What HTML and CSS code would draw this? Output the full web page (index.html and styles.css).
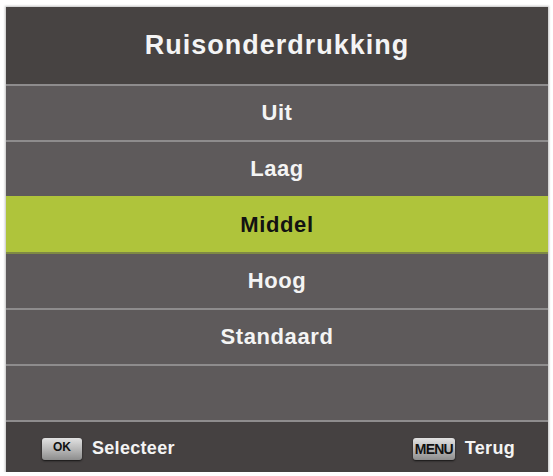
FILE: index.html
```html
<!DOCTYPE html>
<html lang="nl">
<head>
<meta charset="utf-8">
<title>Ruisonderdrukking</title>
<link rel="stylesheet" href="styles.css">
</head>
<body>
<div class="panel">
  <div class="header">Ruisonderdrukking</div>
  <div class="row">Uit</div>
  <div class="row">Laag</div>
  <div class="row selected">Middel</div>
  <div class="row">Hoog</div>
  <div class="row">Standaard</div>
  <div class="row"></div>
  <div class="footer">
    <div class="hint">
      <span class="key key-ok">OK</span>
      <span class="label">Selecteer</span>
    </div>
    <div class="hint">
      <span class="key key-menu">MENU</span>
      <span class="label">Terug</span>
    </div>
  </div>
</div>
</body>
</html>
```

FILE: styles.css
```css
html, body {
  margin: 0;
  padding: 0;
  background: #ffffff;
}

body {
  font-family: "Liberation Sans", Arial, sans-serif;
  font-weight: bold;
}

.panel {
  margin: 7px 0 0 6px;
  width: 542px;
  display: flex;
  flex-direction: column;
  box-shadow: 0 0 2px 1px rgba(120, 120, 120, 0.45);
}

.header {
  height: 77px;
  background: #474342;
  color: #f4f4f4;
  font-size: 27px;
  letter-spacing: 1px;
  display: flex;
  align-items: center;
  justify-content: center;
}

.row {
  height: 54px;
  border-top: 2px solid #8e8c8d;
  background: #5e5a5b;
  color: #f4f4f4;
  font-size: 22px;
  letter-spacing: 0.6px;
  display: flex;
  align-items: center;
  justify-content: center;
}

.row.selected {
  background: #afc43b;
  border-top-color: #afc43b;
  color: #121212;
}

.row.selected + .row {
  border-top-color: #7f8a44;
}

.footer {
  border-top: 2px solid #8e8c8d;
  background: #454141;
  display: flex;
  align-items: center;
  justify-content: space-between;
  padding: 3px 33px 0 36px;
  height: 47px;
}

.hint {
  display: flex;
  align-items: center;
  gap: 10px;
}

.label {
  color: #f4f4f4;
  font-size: 18px;
  letter-spacing: 0.3px;
}

.key {
  height: 22px;
  border-radius: 3px;
  background: linear-gradient(#e2e2e2, #b5b5b5 55%, #8d8d8d);
  box-shadow: 0 1px 2px rgba(0, 0, 0, 0.7);
  color: #111;
  display: flex;
  justify-content: center;
  box-sizing: border-box;
}

.key-ok {
  width: 40px;
  font-size: 12px;
  padding-top: 2px;
}

.key-menu {
  width: 42px;
  font-size: 14px;
  letter-spacing: -0.8px;
  padding-top: 3px;
  align-items: flex-start;
}
```
